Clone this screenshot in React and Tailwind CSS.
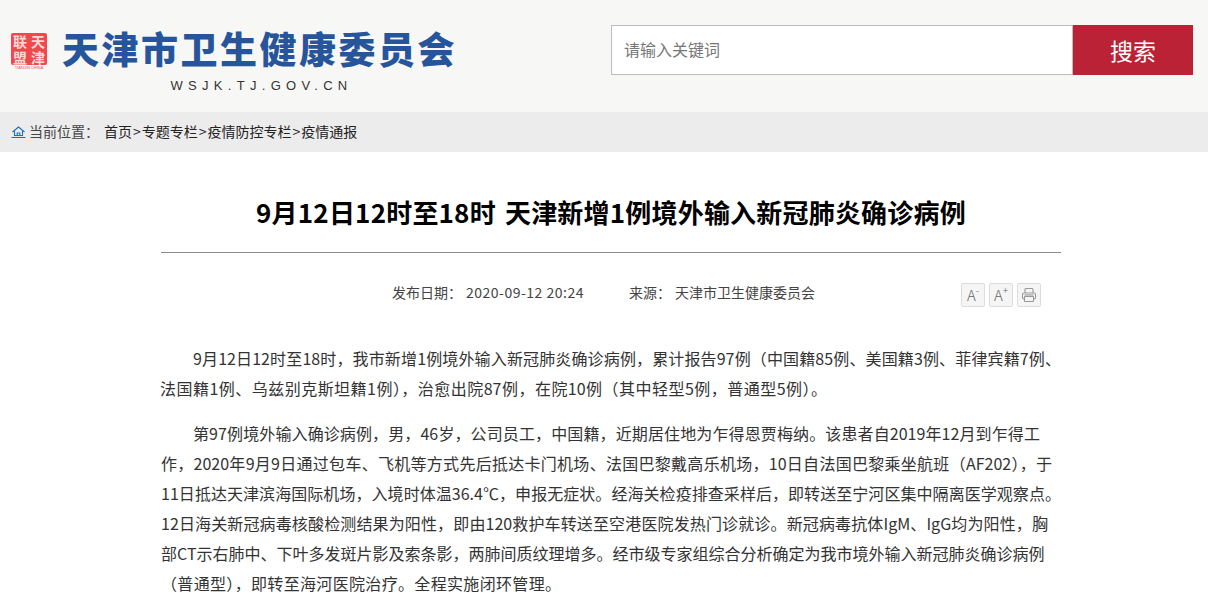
const font = { fontFamily: '"Microsoft YaHei", "Noto Sans CJK SC", sans-serif' };

const justified = "block whitespace-nowrap text-justify [text-align-last:justify]";

const firstPara = [
  { text: "9月12日12时至18时，我市新增1例境外输入新冠肺炎确诊病例，累计报告97例（中国籍85例、美国籍3例、菲律宾籍7例、", cls: "w-[868px] ml-[32px]" },
  { text: "法国籍1例、乌兹别克斯坦籍1例），治愈出院87例，在院10例（其中轻型5例，普通型5例）。", cls: "w-[667px] -ml-[1px]" },
];

const secondPara = [
  { text: "第97例境外输入确诊病例，男，46岁，公司员工，中国籍，近期居住地为乍得恩贾梅纳。该患者自2019年12月到乍得工", cls: "w-[847px] ml-[32px]" },
  { text: "作，2020年9月9日通过包车、飞机等方式先后抵达卡门机场、法国巴黎戴高乐机场，10日自法国巴黎乘坐航班（AF202），于", cls: "w-[891px]" },
  { text: "11日抵达天津滨海国际机场，入境时体温36.4℃，申报无症状。经海关检疫排查采样后，即转送至宁河区集中隔离医学观察点。", cls: "w-[900px]" },
  { text: "12日海关新冠病毒核酸检测结果为阳性，即由120救护车转送至空港医院发热门诊就诊。新冠病毒抗体IgM、IgG均为阳性，胸", cls: "w-[887px]" },
  { text: "部CT示右肺中、下叶多发斑片影及索条影，两肺间质纹理增多。经市级专家组综合分析确定为我市境外输入新冠肺炎确诊病例", cls: "w-[883px]" },
  { text: "（普通型），即转至海河医院治疗。全程实施闭环管理。", cls: "w-[400px]" },
];

function Seal() {
  return (
    <div className="w-[36px] flex flex-col items-center">
      <div className="w-[36px] h-[32px] bg-[#f0484d] rounded-[2px] grid grid-cols-2 text-[14px] leading-[16px] text-[#ffd9d9] font-bold text-center">
        <span>联</span>
        <span>天</span>
        <span>盟</span>
        <span>津</span>
      </div>
      <div className="text-[4px] leading-[5px] text-[#e8585c] whitespace-nowrap" style={{ fontFamily: '"Liberation Sans", sans-serif' }}>TIANJIN CHINA</div>
    </div>
  );
}

function HomeIcon() {
  return (
    <svg width="15" height="12" viewBox="0 0 15 12" fill="none" stroke="#1a73b8" strokeWidth="1.1">
      <path d="M1.5 6L7.5 1l6 5" />
      <path d="M3.5 5v4.5h8V5" />
      <path d="M6.2 9.5V7h2.6v2.5" />
      <path d="M0.5 11.5h14" />
    </svg>
  );
}

function PrintIcon() {
  return (
    <svg width="16" height="16" viewBox="0 0 16 16" fill="none" stroke="#999" strokeWidth="1.1">
      <path d="M4 6V2.5a1 1 0 0 1 1-1h6a1 1 0 0 1 1 1V6" />
      <rect x="1.5" y="6" width="13" height="6" rx="1.5" />
      <rect x="3.5" y="9.5" width="9" height="5" rx="0.5" fill="#f5f5f5" />
      <path d="M3.5 8h9" />
    </svg>
  );
}

function ToolBtn({ children }) {
  return (
    <div className="w-[24px] h-[24px] border border-[#dcdcdc] rounded-[2px] bg-[#f5f5f5] flex items-center justify-center text-[15px] font-light text-[#666]">
      {children}
    </div>
  );
}

export default function App() {
  return (
    <div className="bg-white text-[#333] overflow-hidden h-[599px]" style={font}>
      <header className="h-[112px] bg-[#f7f7f6] flex">
        <div className="ml-[11px] mt-[33px]">
          <Seal />
        </div>
        <div className="ml-[16px] mt-[24px] w-[393px] flex flex-col items-center">
          <h1 className="text-[37px] leading-[48px] font-black text-[#26559c] tracking-[2.5px] whitespace-nowrap">天津市卫生健康委员会</h1>
          <p className="mt-[6px] pl-[4px] text-[13px] leading-[15px] tracking-[5.3px] text-[#333]" style={{ fontFamily: '"Liberation Sans", sans-serif' }}>WSJK.TJ.GOV.CN</p>
        </div>
        <div className="ml-[155px] mt-[25px] flex h-[50px]">
          <div className="w-[462px] border border-[#bdbdbd] bg-white pl-[12px] pb-[2px] flex items-center text-[16px] text-[#777]">请输入关键词</div>
          <button className="w-[120px] bg-[#bc2235] text-white text-[23px]">搜索</button>
        </div>
      </header>

      <nav className="h-[40px] bg-[#ececec] flex items-center pl-[11px] pb-[2px] text-[14px] whitespace-nowrap">
        <span className="mr-[3px] mt-[2px]"><HomeIcon /></span>
        <span className="text-[#444]">当前位置：</span>
        <span className="ml-[5px] text-[#222]">
          首页<span className="mx-[1px]">&gt;</span>专题专栏<span className="mx-[1px]">&gt;</span>疫情防控专栏<span className="mx-[1px]">&gt;</span>疫情通报
        </span>
      </nav>

      <main className="w-[900px] ml-[161px]">
        <h2 className="pt-[41px] h-[101px] text-center text-[26px] leading-[38px] tracking-[0.2px] [word-spacing:3px] font-bold text-black border-b border-[#8a8a8a] whitespace-nowrap">
          9月12日12时至18时 天津新增1例境外输入新冠肺炎确诊病例
        </h2>

        <div className="h-[90px] flex pt-[27px] text-[14px] leading-[24px] text-[#444]">
          <span className="ml-[231px]">发布日期：</span>
          <span className="ml-[4px] tracking-[0.5px]">2020-09-12 20:24</span>
          <span className="ml-[45px]">来源：</span>
          <span className="ml-[4px]">天津市卫生健康委员会</span>
          <div className="ml-auto mr-[20px] mt-[3px] flex gap-[4px] h-[24px]">
            <ToolBtn>A<sup className="text-[10px]">-</sup></ToolBtn>
            <ToolBtn>A<sup className="text-[10px]">+</sup></ToolBtn>
            <ToolBtn><PrintIcon /></ToolBtn>
          </div>
        </div>

        <div className="text-[16px] leading-[30px] text-[#333] space-y-[15px]">
          <div>
            {firstPara.map((line, i) => (
              <p key={i} className={`${justified} ${line.cls}`}>{line.text}</p>
            ))}
          </div>
          <div>
            {secondPara.map((line, i) => (
              <p key={i} className={`${justified} ${line.cls}`}>{line.text}</p>
            ))}
          </div>
        </div>
      </main>
    </div>
  );
}
